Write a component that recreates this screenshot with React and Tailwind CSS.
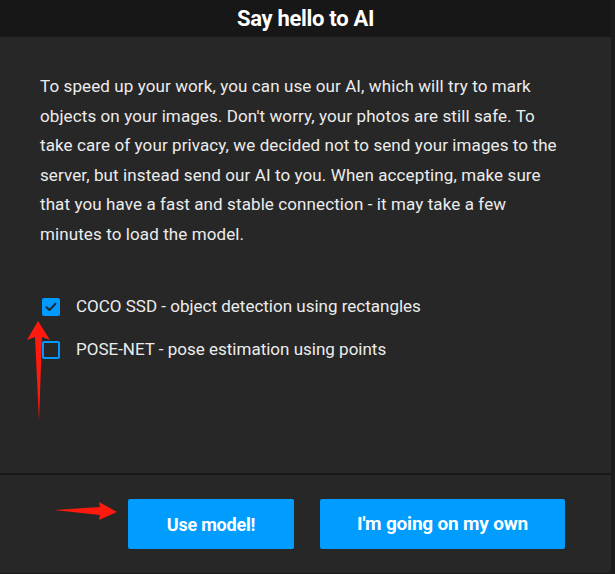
import React from 'react'

const font = { fontFamily: 'Roboto, "Open Sans", sans-serif' }

const Checkbox = ({ checked, label }) => (
  <label className="flex items-center gap-[16px] h-[22px]">
    {checked ? (
      <span className="w-[18px] h-[18px] rounded-[2px] bg-[#0099ff] flex items-center justify-center">
        <svg width="12" height="10" viewBox="0 0 12 10" fill="none">
          <path d="M1.5 5.2 L4.5 8 L10.5 1.8" stroke="#1f2933" strokeWidth="2" strokeLinecap="round" strokeLinejoin="round" />
        </svg>
      </span>
    ) : (
      <span className="w-[18px] h-[18px] rounded-[2px] border-2 border-[#0099ff]" />
    )}
    <span className="text-[17px] text-[#ececec]">{label}</span>
  </label>
)

export default function App() {
  return (
    <div className="relative w-[615px] h-[574px] bg-[#1b1b1b]" style={font}>
      <div className="w-[611px] h-[573px] flex flex-col rounded-br-[4px] overflow-hidden bg-[#272727]">
        {/* header */}
        <div className="h-[37px] bg-[#171717] flex items-center justify-center">
          <h1 className="text-[22px] font-bold text-white tracking-[-0.3px]">Say hello to AI</h1>
        </div>

        {/* body */}
        <div className="flex-1 px-[40px] pt-[35px]">
          <p className="text-[17px] leading-[29.5px] tracking-[0.1px] text-[#ececec]">
            To speed up your work, you can use our AI, which will try to mark<br />
            objects on your images. Don't worry, your photos are still safe. To<br />
            take care of your privacy, we decided not to send your images to the<br />
            server, but instead send our AI to you. When accepting, make sure<br />
            that you have a fast and stable connection - it may take a few<br />
            minutes to load the model.
          </p>
          <div className="mt-[47px] pl-[2px] flex flex-col gap-[21px]">
            <Checkbox checked label="COCO SSD - object detection using rectangles" />
            <Checkbox label="POSE-NET - pose estimation using points" />
          </div>
        </div>

        {/* footer */}
        <div className="h-[100px] border-t-2 border-[#171717] flex items-start gap-[26px] pl-[128px] pt-[24px]">
          <button className="w-[166px] h-[50px] rounded-[2px] bg-[#009dff] text-white text-[18px] font-bold tracking-[-0.2px]">
            Use model!
          </button>
          <button className="w-[245px] h-[50px] rounded-[2px] bg-[#009dff] text-white text-[19px] font-bold tracking-[-0.2px]">
            I'm going on my own
          </button>
        </div>
      </div>

      {/* red annotation arrows */}
      <svg className="absolute left-0 top-0 pointer-events-none" width="615" height="574">
        <polygon points="27,340 38,321 50,340 42,337 39,421 35,337" fill="#ff1a0d" />
        <polygon points="54,510 100,507 99,502 117,512 99,520 100,515" fill="#ff1a0d" />
      </svg>
    </div>
  )
}
